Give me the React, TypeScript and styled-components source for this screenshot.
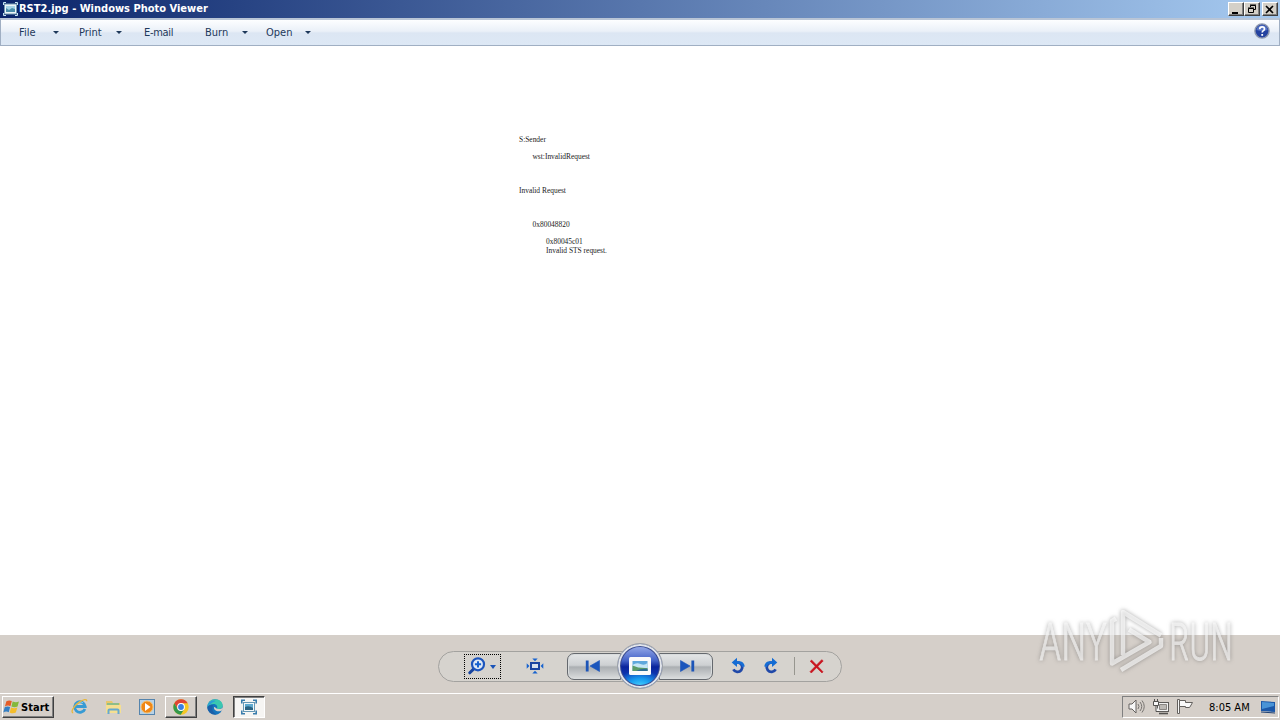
import type { ReactNode } from 'react';
import styled, { createGlobalStyle, css } from 'styled-components';

const GlobalStyle = createGlobalStyle`
  * {
    box-sizing: border-box;
  }

  body {
    margin: 0;
    overflow: hidden;
    font-family: 'DejaVu Sans Condensed', 'DejaVu Sans', sans-serif;
    font-stretch: condensed;
    font-size: 11px;
  }

  svg {
    display: block;
    flex: none;
  }
`

const Screen = styled.div`
  position: relative;
  display: flex;
  flex-direction: column;
  width: 1280px;
  height: 720px;
  background: #fff;
`

const TitleBar = styled.header`
  display: flex;
  align-items: center;
  height: 18px;
  padding: 0 2px 0 3px;
  background: linear-gradient(90deg, #0a246a, #a6caf0);
`

const Title = styled.h1`
  flex: 1;
  margin: 0 0 0 1px;
  color: #fff;
  font-size: 11px;
  font-weight: 700;
  line-height: 18px;
  letter-spacing: 0;
  white-space: nowrap;
`

const CaptionButton = styled.button<{ $gap?: number }>`
  display: flex;
  align-items: center;
  justify-content: center;
  width: 16px;
  height: 14px;
  margin-left: ${({ $gap = 0 }) => $gap}px;
  padding: 0;
  border: 1px solid;
  border-color: #fff #404040 #404040 #fff;
  box-shadow: inset -1px -1px #808080;
  background: #d4d0c8;
`

const MenuBar = styled.nav`
  display: flex;
  align-items: center;
  height: 28px;
  padding: 0 9px 2px 18px;
  border: 1px solid #a0afc3;
  border-width: 2px 1px 1px;
  border-top-color: #b9c5d6;
  background: linear-gradient(#fdfeff, #eaf0f8 45%, #dce6f3 52%, #dde8f5);
`

const MenuItem = styled.div<{ $width: number; $spacing?: number }>`
  width: ${({ $width }) => $width}px;
  padding-top: 2px;
  color: #1e395b;
  line-height: 22px;
  letter-spacing: ${({ $spacing = 0 }) => $spacing}px;
  white-space: nowrap;
`

const MenuArrow = styled.span<{ $gap: number }>`
  width: 6px;
  margin-top: 2px;
  margin-right: ${({ $gap }) => $gap}px;
  border: 3px solid transparent;
  border-top-color: #1e395b;
  border-bottom: 0;
`

const Help = styled.div`
  margin: -1px 0 0 auto;
`

const Photo = styled.main`
  flex: 1;
  padding: 89px 0 0 519px;
  background: #fff;
`

const Line = styled.p<{ $indent?: number; $gap?: number }>`
  margin: ${({ $gap = 0 }) => $gap}px 0 0 ${({ $indent = 0 }) => $indent}px;
  color: #222;
  font-family: 'Liberation Serif', serif;
  font-size: 7.45px;
  line-height: 9px;
`

const ControlArea = styled.footer`
  display: flex;
  align-items: center;
  justify-content: center;
  height: 58px;
  padding-top: 4px;
  background: #d5cfc9;
`

const Controls = styled.div`
  display: flex;
  align-items: center;
  width: 404px;
  height: 31px;
  padding-left: 25px;
  border: 1px solid #a3a29f;
  border-radius: 16px;
  background: #d6d3ce;
`

const ZoomButton = styled.div`
  display: flex;
  align-items: center;
  gap: 4px;
  width: 37px;
  height: 25px;
  padding-left: 3px;
  border: 1px dotted #000;
`

const ZoomArrow = styled.span`
  margin-top: 2px;
  border: 3.5px solid transparent;
  border-top: 4px solid #1953b8;
  border-bottom: 0;
`

const FitButton = styled.div`
  margin: 0 23px 0 25px;
`

const StepButton = styled.div<{ $next?: boolean }>`
  display: flex;
  align-items: center;
  justify-content: center;
  width: 54px;
  height: 27px;
  border: 1px solid #65696e;
  border-radius: ${({ $next }) => ($next ? '0 7px 7px 0' : '7px 0 0 7px')};
  background: linear-gradient(#e4e6e7, #cdd0d2 45%, #abafb2 52%, #c7cacc 80%, #dcdede);
  box-shadow: inset 0 0 0 1px #d9dcdd;
  ${({ $next }) =>
    $next
      ? css`
          padding-left: 3px;
        `
      : css`
          padding-right: 4px;
        `}
`

const PlayButton = styled.div`
  z-index: 1;
  display: flex;
  align-items: center;
  justify-content: center;
  width: 46px;
  height: 46px;
  margin: 0 -4px;
  border: 1px solid #999fa8;
  border-radius: 50%;
  background: radial-gradient(ellipse 75% 55% at 50% 100%, #53ddff, #189df0 38%, transparent 75%),
    linear-gradient(#a4b6ee, #4261c7 38%, #0a249c 52%, #1555d2);
  background-clip: content-box;
  box-shadow: inset 0 0 0 2px #e2e5ea, inset 0 0 0 3px #3e4f92;
`

const RotateGroup = styled.div`
  display: flex;
  gap: 17px;
  margin-left: 17px;
`

const Separator = styled.span`
  width: 1px;
  height: 18px;
  margin: 0 14px 0 15px;
  background: #97968f;
`

const TaskBar = styled.footer`
  display: flex;
  align-items: center;
  height: 27px;
  padding: 0 2px 1px;
  border-top: 1px solid #fff;
  background: #d5cfc9;
`

const raised = css`
  border: 1px solid;
  border-color: #fff #404040 #404040 #fff;
  box-shadow: inset -1px -1px #808080;
`

const StartButton = styled.button`
  display: flex;
  align-items: center;
  gap: 1px;
  width: 52px;
  height: 22px;
  margin: 0 9px 0 0;
  padding: 1px 0 0;
  background: #d5cfc9;
  color: #000;
  font: inherit;
  font-weight: 700;
  letter-spacing: 0.05px;
  ${raised}
`

const TaskButton = styled.div<{ $state?: 'raised' | 'pressed' }>`
  display: flex;
  align-items: center;
  justify-content: center;
  width: 32px;
  height: 22px;
  margin-right: 2px;
  ${({ $state }) => $state === 'raised' && raised}
  ${({ $state }) =>
    $state === 'pressed' &&
    css`
      border: 1px solid;
      border-color: #404040 #fff #fff #404040;
      box-shadow: inset 1px 1px #808080;
      background: #f6f5f3;
    `}
`

const Tray = styled.div`
  display: flex;
  align-items: center;
  width: 157px;
  height: 22px;
  margin: 0 -1px 0 auto;
  padding-left: 5px;
  border: 1px solid;
  border-color: #808080 #fff #fff #808080;
`

const TrayIcon = styled.div<{ $gap: number }>`
  margin-right: ${({ $gap }) => $gap}px;
`

const Clock = styled.time`
  width: 51px;
  padding-top: 1px;
  color: #000;
  letter-spacing: 0;
  white-space: nowrap;
`

const Watermark = styled.svg`
  position: absolute;
  left: 1030px;
  top: 602px;
  filter: drop-shadow(0 0 2px rgba(80, 80, 80, 0.75));
`

const Icon = ({ w = 16, h = 16, box, children }: { w?: number; h?: number; box?: string; children: ReactNode }) => (
  <svg width={w} height={h} viewBox={box ?? `0 0 ${w} ${h}`} fill="none">
    {children}
  </svg>
)

const ViewerIcon = () => (
  <Icon w={15} h={14}>
    <rect x="1.5" y="2" width="12" height="10" fill="#edf5f8" stroke="#779eb5" />
    <path d="M3 4h9v6H3z" fill="#4b8daa" />
    <path d="M3 4h9v3l-3-1-3 2-3-2z" fill="#a4d3e6" />
    <path d="M.5 3V.5H3M12 .5h2.5V3M.5 11v2.5H3M12 13.5h2.5V11" stroke="#c6e5f2" />
  </Icon>
)

const HelpIcon = () => (
  <Icon w={16} h={16}>
    <circle cx="8" cy="8" r="7.1" fill="#2442a0" stroke="#8d97ae" strokeWidth="1.4" />
    <path d="M2.4 7a5.7 5.7 0 0 1 11.2 0q-5.6 2-11.2 0" fill="#5573c4" />
    <path d="M5.7 6.2c0-3.3 4.8-3 4.8-.3 0 1.8-2.3 1.7-2.3 3.6" stroke="#fff" strokeWidth="1.7" />
    <path d="M7.3 11h1.8v1.8H7.3z" fill="#fff" />
  </Icon>
)

const MagnifierIcon = () => (
  <Icon w={18} h={18}>
    <path d="m6 11.6-4.2 4.2" stroke="#17449f" strokeWidth="3" strokeLinecap="round" />
    <circle cx="10" cy="7.3" r="6" fill="#e0eaf6" stroke="#1d55bd" strokeWidth="2.2" />
    <path d="M10 4.2v6.2M6.9 7.3h6.2" stroke="#1762cf" strokeWidth="2" />
  </Icon>
)

const FitIcon = () => (
  <Icon w={18} h={16}>
    <rect x="5" y="5" width="8" height="6" fill="#d8e1ed" stroke="#1b45a1" strokeWidth="2" />
    <path d="M6.3.5h5.4L9 3.2zM6.3 15.5h5.4L9 12.8zM.7 5.3v5.4L3.4 8zM17.3 5.3v5.4L14.6 8z" fill="#1763cf" />
  </Icon>
)

const StepIcon = ({ next }: { next?: boolean }) => (
  <Icon w={15} h={12}>
    <g transform={next ? 'translate(15 0) scale(-1 1)' : undefined}>
      <path d="M.8.5h2.8v11H.8z" fill="#1c55b8" />
      <path d="M14.5.5v11L5 6z" fill="#1b56bc" stroke="#1b56bc" strokeWidth=".6" />
    </g>
  </Icon>
)

const SlideIcon = () => (
  <Icon w={22} h={18}>
    <rect width="22" height="18" rx="1.5" fill="#fafafa" />
    <path d="M3.5 4h15v10h-15z" fill="#5fa8dc" />
    <path d="M3.5 8q4-3 8-1t7-1v5h-15z" fill="#c5e6f5" />
    <path d="M3.5 8.5q6 3 15 2.500V14h-15z" fill="#5b9c68" />
    <path d="M7 14q6-3 11.5-2v2z" fill="#2d6c94" />
  </Icon>
)

const RotateIcon = ({ right }: { right?: boolean }) => (
  <Icon w={16} h={18}>
    <g transform={right ? 'translate(16 0) scale(-1 1)' : undefined}>
      <path d="M6.8 5.7h2a4.7 4.7 0 1 1-5.4 6.7" stroke="#2048a8" strokeWidth="2.8" />
      <path d="M6.8 5.7h2a4.7 4.7 0 0 1 4.6 4" stroke="#166dd4" strokeWidth="2.8" />
      <path d="m1.7 5.4 5.3-4.7v9.2z" fill="#146cd4" />
    </g>
  </Icon>
)

const DeleteIcon = () => (
  <Icon w={15} h={15}>
    <path d="M1.2 2.3 2.6 1 14 12.8 13 14zM12.7.7l1.5 1.2L2.3 14 1 12.7z" fill="#c9141f" stroke="#c9141f" strokeWidth=".6" />
  </Icon>
)

const WindowsIcon = () => (
  <Icon w={17} h={16} box="0 0 16 15">
    <path d="M3.2 2.2Q5.7.6 8.3 1.9L7 6.7Q4.5 5.5 1.8 7z" fill="#e55d27" />
    <path d="M9.1 2.3q2.9 1.5 5.9.1l-1.3 4.7q-2.9 1.4-5.8-.1z" fill="#84b83d" />
    <path d="M1.6 7.8q2.5-1.5 5.1-.3l-1.3 4.9Q2.9 11 .3 12.6z" fill="#357fc3" />
    <path d="M7.6 7.9q2.9 1.5 5.9.1l-1.4 4.7q-2.9 1.5-5.8-.1z" fill="#f4bd2c" />
  </Icon>
)

const ExplorerIcon = () => (
  <Icon w={17} h={17}>
    <path d="M13.9 10.9a5.3 5.3 0 1 1 .3-2.4H4.6" stroke="#379bd4" strokeWidth="2.8" />
    <path d="M5 6.8q3-4.2 7-2.2" stroke="#87cdf0" />
    <path d="M2.2 14.8C-.6 14.5 2 8.6 8 4.4c4.4-3 8-3.9 7.7-1.1" stroke="#e7b63c" strokeWidth="1.3" />
  </Icon>
)

const FolderIcon = () => (
  <Icon w={17} h={16}>
    <path d="M1 2h6l1 2h7v10H1z" fill="#e8c76b" />
    <path d="M2 4h12v3H2z" fill="#8ebd88" />
    <path d="M1 6h15v8H1z" fill="#f5df91" />
    <path d="M3.5 15v-3.5q0-1 1-1h8q1 0 1 1V15" stroke="#67a9cf" strokeWidth="2" />
  </Icon>
)

const MediaIcon = () => (
  <Icon w={16} h={16}>
    <rect x=".5" y=".5" width="15" height="15" fill="#b8d2e6" stroke="#5584ad" />
    <circle cx="8" cy="8" r="6" fill="#ef8715" stroke="#f8be69" />
    <path d="m6 4 5.5 4L6 12z" fill="#fff" />
  </Icon>
)

const ChromeIcon = () => (
  <Icon w={16} h={16}>
    <circle cx="8" cy="8" r="7.7" fill="#f6c722" />
    <path d="M1.3 4.2A7.7 7.7 0 0 1 14.7 4.2H8L4.7 9.9z" fill="#df4434" />
    <path d="M1.3 4.2 4.7 10 8 11.7l3.3-1.8-3.6 5.8A7.7 7.7 0 0 1 1.3 4.2" fill="#34984b" />
    <circle cx="8" cy="8" r="3.9" fill="#fff" />
    <circle cx="8" cy="8" r="2.9" fill="#397fe2" />
  </Icon>
)

const EdgeIcon = () => (
  <Icon w={16} h={16}>
    <circle cx="8" cy="8" r="7.7" fill="#1474bd" />
    <path d="M.4 8C.5 3.5 3.8.3 8 .3c4.8 0 7.7 3 7.7 6.2 0 3-3.2 4.2-5.9 3.2 1.5-2.3-.6-4.6-3.2-4.6C3.7 5.1 1.3 6.5.4 8" fill="#3ac7b0" />
    <path d="M.4 8C1 3 5.1.5 8.6 2c-2 1-3.8 1.4-4.8 3C2.2 5.4 1.3 6.5.4 8" fill="#2a9cd8" />
    <path d="M7 8c-.5 3 3 5.500 7.300 3.800l1.200-.5.5-3c-1 1.700-4 2.300-6 1.400C9 9.300 8.500 8 7 8" fill="#d5cfc9" />
    <path d="M6.1 6.4C3.9 9.7 6.2 14 9.8 15.4 4.8 16.4.2 12.5.4 8c1.2-1.7 3.6-2.5 5.7-1.6" fill="#1b5fa8" />
  </Icon>
)

const PhotoTaskIcon = () => (
  <Icon w={16} h={16}>
    <rect x="2.5" y="3.5" width="11" height="9" fill="#f2f7f9" stroke="#6698b5" />
    <path d="M4 5h8v6H4z" fill="#5ea9cf" />
    <path d="M4 8q4-2 8 1v2H4z" fill="#2b6382" />
    <path d="M.8 4.5V1.3H4M12 1.3h3.2v3.2M.8 11.5v3.2H4M12 14.7h3.2v-3.2" stroke="#397dad" strokeWidth="1.6" />
  </Icon>
)

const SpeakerIcon = () => (
  <Icon w={17} h={15}>
    <path d="M1 5h3l4-4v13l-4-4H1z" fill="#f7f7f7" stroke="#64615e" />
    <path d="M10 5q2 2.5 0 5M12 3q3.5 4.5 0 9M14 1.5q4.5 6 0 12" stroke="#777471" />
  </Icon>
)

const NetworkIcon = () => (
  <Icon w={17} h={16}>
    <rect x="4.5" y="3.5" width="11" height="9" fill="#f2f2f2" stroke="#5e5c5a" />
    <path d="M6.5 5.5h7v5h-7z" fill="#bcb9b5" stroke="#8a8784" />
    <path d="M6 14.5h9" stroke="#53514f" strokeWidth="1.6" />
    <path d="M.5 2.5h5v4h-5zM1.5 0v2.5M4.5 0v2.5M3 6.5v6h3" fill="#f8f8f8" stroke="#53514f" />
  </Icon>
)

const FlagIcon = () => (
  <Icon w={17} h={15}>
    <path d="M.5.5h2v14h-2z" fill="#f9f9f9" stroke="#64615e" />
    <path d="M2.5 1.5h6v2h7l-2 3.5-1 1.5h-4v-1h-6z" fill="#f9f9f9" stroke="#64615e" />
  </Icon>
)

const DesktopIcon = () => (
  <Icon w={16} h={14}>
    <path d="m1 1 14 1v10L1 11z" fill="#1b57a8" />
    <path d="m2 2 12 1v3L2 9z" fill="#4993d6" />
    <path d="m1 12 14 1" stroke="#1d3f72" />
  </Icon>
)

const AnyRunMark = () => (
  <Watermark width="240" height="80" viewBox="0 0 240 80" fill="none">
    <g opacity=".62" fill="#fff" stroke="#fff" strokeWidth=".8" fontFamily="Roboto, sans-serif" fontSize="52" fontWeight="300">
      <text x="9" y="58" textLength="68" lengthAdjust="spacingAndGlyphs">ANY</text>
      <text x="139" y="58" textLength="64" lengthAdjust="spacingAndGlyphs">RUN</text>
    </g>
    <g opacity=".65" stroke="#fff" strokeWidth="4.5" strokeLinejoin="round">
      <path d="M93 53V10l38 23.5" />
      <path d="M86 16.5 82 19v42.5L119.5 40 99 27.5" />
      <path d="m91 68 40-24v-8" />
    </g>
  </Watermark>
)

const App = () => (
  <Screen>
    <GlobalStyle />
    <TitleBar>
      <ViewerIcon />
      <Title>RST2.jpg - Windows Photo Viewer</Title>
      <CaptionButton>
        <Icon w={10} h={9}><path d="M1 7h6v2H1z" fill="#000" /></Icon>
      </CaptionButton>
      <CaptionButton>
        <Icon w={10} h={10}><path d="M3.5 3V1.5h5v4H7M3 1h6M1.5 4.5h5v4h-5zM1 4h6" stroke="#000" /></Icon>
      </CaptionButton>
      <CaptionButton $gap={2}>
        <Icon w={10} h={9}><path d="m1 1 7 7M8 1 1 8" stroke="#000" strokeWidth="1.6" /></Icon>
      </CaptionButton>
    </TitleBar>
    <MenuBar>
      <MenuItem $width={34}>File</MenuItem>
      <MenuArrow $gap={20} />
      <MenuItem $width={37}>Print</MenuItem>
      <MenuArrow $gap={22} />
      <MenuItem $width={61} $spacing={-0.3}>E-mail</MenuItem>
      <MenuItem $width={37}>Burn</MenuItem>
      <MenuArrow $gap={18} />
      <MenuItem $width={39}>Open</MenuItem>
      <MenuArrow $gap={0} />
      <Help><HelpIcon /></Help>
    </MenuBar>
    <Photo>
      <Line>S:Sender</Line>
      <Line $indent={13.5} $gap={8}>wst:InvalidRequest</Line>
      <Line $gap={25}>Invalid Request</Line>
      <Line $indent={13.5} $gap={25}>0x80048820</Line>
      <Line $indent={27} $gap={8}>0x80045c01</Line>
      <Line $indent={27}>Invalid STS request.</Line>
    </Photo>
    <ControlArea>
      <Controls>
        <ZoomButton>
          <MagnifierIcon />
          <ZoomArrow />
        </ZoomButton>
        <FitButton><FitIcon /></FitButton>
        <StepButton><StepIcon /></StepButton>
        <PlayButton><SlideIcon /></PlayButton>
        <StepButton $next><StepIcon next /></StepButton>
        <RotateGroup>
          <RotateIcon />
          <RotateIcon right />
        </RotateGroup>
        <Separator />
        <DeleteIcon />
      </Controls>
    </ControlArea>
    <TaskBar>
      <StartButton><WindowsIcon />Start</StartButton>
      <TaskButton><ExplorerIcon /></TaskButton>
      <TaskButton><FolderIcon /></TaskButton>
      <TaskButton><MediaIcon /></TaskButton>
      <TaskButton $state="raised"><ChromeIcon /></TaskButton>
      <TaskButton><EdgeIcon /></TaskButton>
      <TaskButton $state="pressed"><PhotoTaskIcon /></TaskButton>
      <Tray>
        <TrayIcon $gap={8}><SpeakerIcon /></TrayIcon>
        <TrayIcon $gap={7}><NetworkIcon /></TrayIcon>
        <TrayIcon $gap={15}><FlagIcon /></TrayIcon>
        <Clock>8:05 AM</Clock>
        <DesktopIcon />
      </Tray>
    </TaskBar>
    <AnyRunMark />
  </Screen>
)

export default App
